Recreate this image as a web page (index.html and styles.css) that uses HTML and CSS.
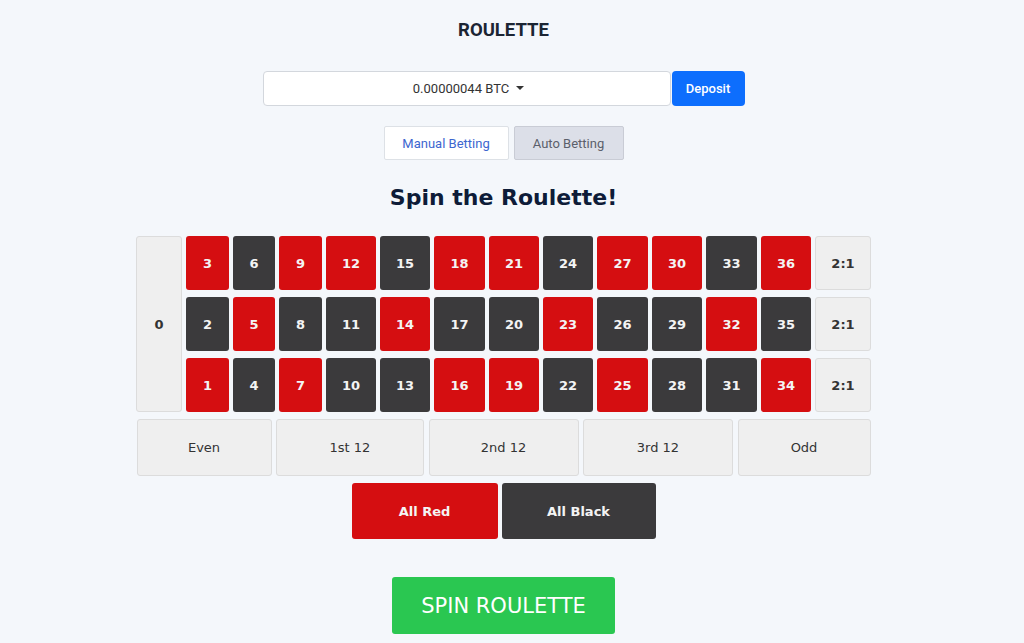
FILE: index.html
```html
<!DOCTYPE html>
<html lang="en">
<head>
    <meta charset="UTF-8">
    <meta name="viewport" content="width=device-width, initial-scale=1.0">
    <title>Roulette</title>
    <link rel="stylesheet" href="styles.css">
</head>
<body>
    <div class="page">
        <h1 class="title">ROULETTE</h1>

        <div class="wallet">
            <div class="balance">0.00000044 BTC <span class="caret"></span></div>
            <button class="deposit">Deposit</button>
        </div>

        <div class="tabs">
            <button class="tab tab-active">Manual Betting</button>
            <button class="tab tab-auto">Auto Betting</button>
        </div>

        <h2 class="heading">Spin the Roulette!</h2>

        <div class="board">
            <div class="cell light zero">0</div>

            <div class="cell red">3</div>
            <div class="cell black">6</div>
            <div class="cell red">9</div>
            <div class="cell red">12</div>
            <div class="cell black">15</div>
            <div class="cell red">18</div>
            <div class="cell red">21</div>
            <div class="cell black">24</div>
            <div class="cell red">27</div>
            <div class="cell red">30</div>
            <div class="cell black">33</div>
            <div class="cell red">36</div>
            <div class="cell light">2:1</div>

            <div class="cell black">2</div>
            <div class="cell red">5</div>
            <div class="cell black">8</div>
            <div class="cell black">11</div>
            <div class="cell red">14</div>
            <div class="cell black">17</div>
            <div class="cell black">20</div>
            <div class="cell red">23</div>
            <div class="cell black">26</div>
            <div class="cell black">29</div>
            <div class="cell red">32</div>
            <div class="cell black">35</div>
            <div class="cell light">2:1</div>

            <div class="cell red">1</div>
            <div class="cell black">4</div>
            <div class="cell red">7</div>
            <div class="cell black">10</div>
            <div class="cell black">13</div>
            <div class="cell red">16</div>
            <div class="cell red">19</div>
            <div class="cell black">22</div>
            <div class="cell red">25</div>
            <div class="cell black">28</div>
            <div class="cell black">31</div>
            <div class="cell red">34</div>
            <div class="cell light">2:1</div>
        </div>

        <div class="outside">
            <div class="cell light">Even</div>
            <div class="cell light">1st 12</div>
            <div class="cell light">2nd 12</div>
            <div class="cell light">3rd 12</div>
            <div class="cell light">Odd</div>
        </div>

        <div class="colors">
            <div class="cell red">All Red</div>
            <div class="cell black">All Black</div>
        </div>

        <button class="spin">SPIN ROULETTE</button>
    </div>
</body>
</html>
```

FILE: styles.css
```css
* {
    box-sizing: border-box;
}

body {
    margin: 0;
    padding-right: 17px;
    background-color: #f4f7fb;
    font-family: Roboto, Arial, sans-serif;
    color: #1b2533;
}

.page {
    display: flex;
    flex-direction: column;
    align-items: center;
}

.title {
    margin: 0;
    padding-top: 20px;
    font-size: 18.5px;
    line-height: 21px;
    font-weight: 700;
    color: #1b2533;
}

.wallet {
    display: flex;
    margin-top: 30px;
}

.balance {
    width: 408px;
    height: 35px;
    display: flex;
    align-items: center;
    justify-content: center;
    padding-left: 4px;
    background: white;
    border: 1px solid #d3d7dd;
    border-radius: 4px;
    font-size: 13px;
    color: #333;
}

.caret {
    display: inline-block;
    margin-left: 7px;
    border-top: 4px solid #333;
    border-left: 4px solid transparent;
    border-right: 4px solid transparent;
    transform: translateY(-1px);
}

.deposit {
    width: 73px;
    height: 35px;
    margin-left: 1px;
    border: none;
    border-radius: 4px;
    background: #0d6efd;
    color: white;
    font-family: Roboto, Arial, sans-serif;
    font-size: 13px;
    font-weight: 500;
}

.tabs {
    display: flex;
    gap: 5px;
    margin-top: 20px;
}

.tab {
    height: 34px;
    border-radius: 2px;
    font-family: Roboto, Arial, sans-serif;
    font-size: 13px;
}

.tab-active {
    width: 125px;
    background: white;
    border: 1px solid #dde1e6;
    color: #3d66cf;
}

.tab-auto {
    width: 110px;
    background: #dcdfe8;
    border: 1px solid #c9ccd5;
    color: #5b606b;
}

.heading {
    margin: 22px 0 0;
    font-family: "Comic Sans MS", "DejaVu Sans", sans-serif;
    font-size: 22px;
    line-height: 32px;
    font-weight: 700;
    color: #0e1c38;
}

.board {
    display: grid;
    grid-template-columns: 46px 43px 42px 43px 50px 50px 51px 50px 50px 51px 50px 51px 50px 56px;
    grid-template-rows: 54px 54px 54px;
    column-gap: 4px;
    row-gap: 7px;
    margin-top: 22px;
}

.cell {
    display: flex;
    align-items: center;
    justify-content: center;
    border-radius: 3px;
    font-family: "Comic Sans MS", "DejaVu Sans", sans-serif;
    font-size: 13px;
    font-weight: 700;
}

.red {
    background: #d50e11;
    color: #f4f4f4;
}

.black {
    background: #3b3a3c;
    color: #f4f4f4;
}

.light {
    background: #efefef;
    border: 1px solid #dcdcdc;
    color: #333;
}

.zero {
    grid-row: 1 / 4;
}

.outside {
    display: grid;
    grid-template-columns: 135px 148px 150px 150px 133px;
    column-gap: 4.5px;
    margin-top: 7px;
    height: 57px;
}

.outside .cell {
    font-weight: 400;
}

.colors {
    display: grid;
    grid-template-columns: 146px 154px;
    column-gap: 4px;
    margin-top: 7px;
    height: 56px;
}

.spin {
    width: 223px;
    height: 57px;
    margin-top: 38px;
    border: none;
    border-radius: 3px;
    background: #2ac751;
    color: white;
    font-family: "Comic Sans MS", "DejaVu Sans", sans-serif;
    font-size: 21px;
}
```
